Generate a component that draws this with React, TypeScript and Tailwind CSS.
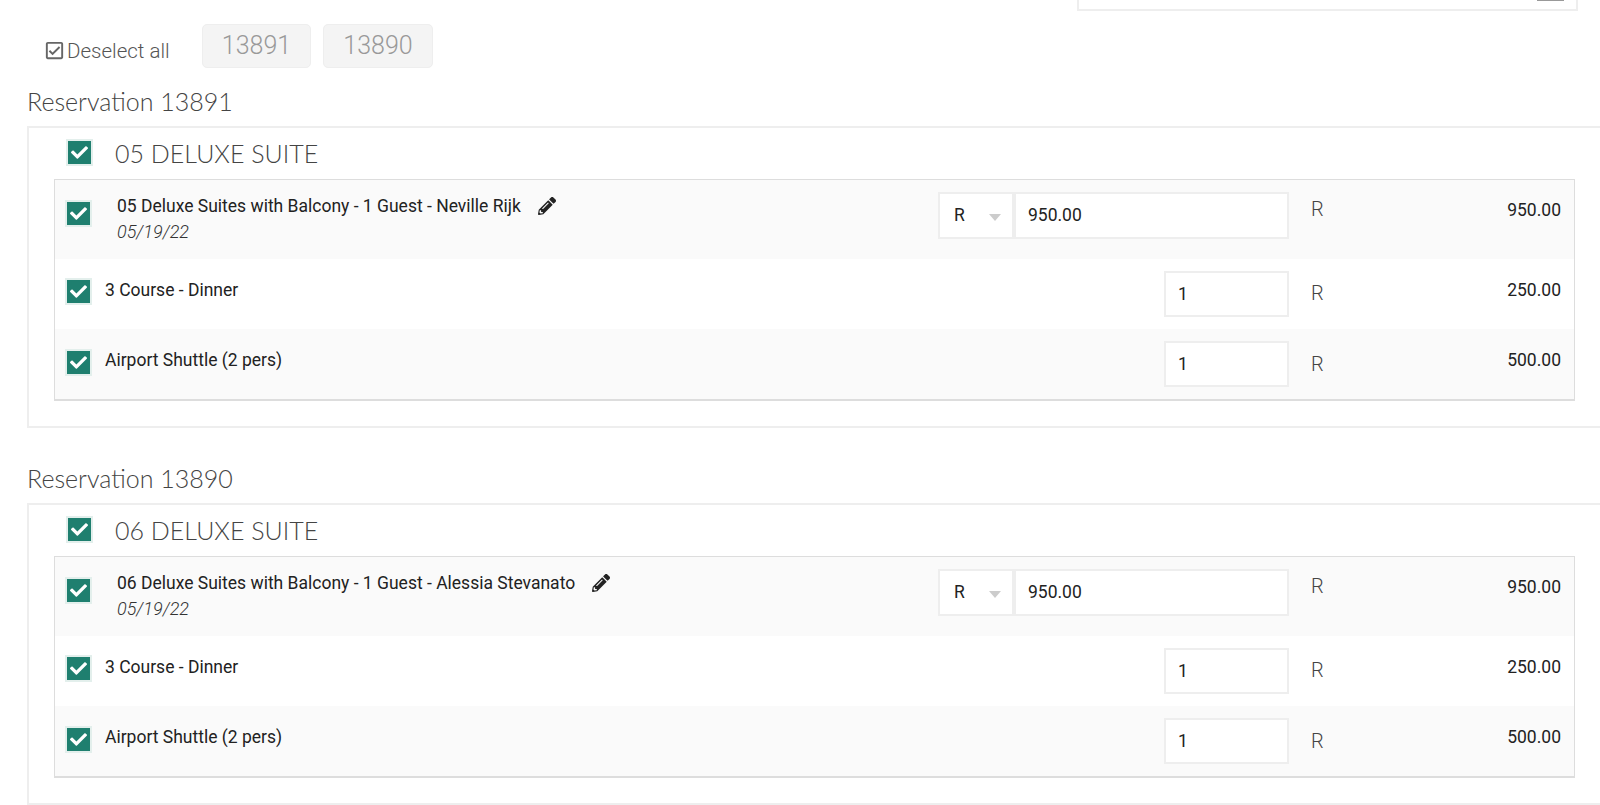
import React from "react";
import { FaCheck, FaPencilAlt } from "react-icons/fa";
import { MdOutlineCheckBox } from "react-icons/md";

const roboto = "font-['Roboto',sans-serif]";
const lato = "font-['Lato',sans-serif]";

function Check({ className = "" }: { className?: string }) {
  return (
    <span className={`flex h-[27px] w-[27px] shrink-0 items-center justify-center border-[2px] border-[#e3efec] bg-[#1f7f6f] text-white ${className}`}>
      <FaCheck size={17} />
    </span>
  );
}

function Field({ children, className = "" }: { children: React.ReactNode; className?: string }) {
  return (
    <div className={`flex h-[46px] items-center border-2 border-[#eeeeee] bg-white text-[17.5px] text-[#222] ${className}`}>
      {children}
    </div>
  );
}

function Row({ label, amount, striped, height, cbTop, textTop, inputTop, rTop, amountTop }: {
  label: string; amount: string; striped?: boolean; height: string; cbTop: string; textTop: string; inputTop: string; rTop: string; amountTop: string;
}) {
  return (
    <div className={`flex items-start ${height} ${striped ? "bg-[#fafafa]" : "bg-white"}`}>
      <Check className={`ml-[10px] ${cbTop}`} />
      <div className={`ml-[13px] flex-1 text-[17.5px] leading-[22px] text-[#222] ${textTop}`}>{label}</div>
      <Field className={`w-[125px] pl-[12px] ${inputTop}`}>1</Field>
      <div className={`ml-[22px] w-[60px] text-[20px] font-light leading-[24px] text-[#444] ${rTop}`}>R</div>
      <div className={`mr-[13px] w-[190px] text-right text-[17.5px] leading-[22px] text-[#222] ${amountTop}`}>{amount}</div>
    </div>
  );
}

function Reservation({ id, room, guest, mtClass }: { id: string; room: string; guest: string; mtClass: string }) {
  return (
    <section className={mtClass}>
      <h2 className={`${lato} mb-[8px] ml-[27px] h-[34px] text-[25px] font-light leading-[34px] text-[#444]`}>Reservation {id}</h2>
      <div className="ml-[27px] h-[302px] w-[1600px] border-2 border-[#eeeeee]">
        <div className="flex h-[51px] items-start">
          <Check className="ml-[37px] mt-[11px]" />
          <div className={`${lato} ml-[22px] mt-[7px] text-[25px] font-light leading-[36px] text-[#444]`}>{room} DELUXE SUITE</div>
        </div>
        <div className="ml-[25px] h-[222px] w-[1521px] border border-b-2 border-[#dddddd]">
          <div className="flex h-[79px] items-start bg-[#fafafa]">
            <Check className="ml-[10px] mt-[20px]" />
            <div className="ml-[25px] flex-1">
              <div className="mt-[15px] flex items-center text-[17.5px] leading-[22px] text-[#222]">
                <span>{room} Deluxe Suites with Balcony - 1 Guest - {guest}</span>
                <FaPencilAlt size={18} className="ml-[17px] text-[#222]" />
              </div>
              <div className="mt-[4px] text-[18px] italic font-light leading-[22px] text-[#333]">05/19/22</div>
            </div>
            <Field className="mt-[12px] h-[47px] w-[76px] justify-between pl-[14px] pr-[11px]">
              <span>R</span>
              <span className="mt-[3px] h-0 w-0 border-x-[6px] border-t-[7px] border-x-transparent border-t-[#cccccc]" />
            </Field>
            <Field className="mt-[12px] h-[47px] w-[275px] pl-[12px]">950.00</Field>
            <div className="ml-[22px] mt-[17px] w-[60px] text-[20px] font-light leading-[24px] text-[#444]">R</div>
            <div className="mr-[13px] mt-[19px] w-[190px] text-right text-[17.5px] leading-[22px] text-[#222]">950.00</div>
          </div>
          <Row label="3 Course - Dinner" amount="250.00" height="h-[70px]" cbTop="mt-[19px]" textTop="mt-[20px]" inputTop="mt-[12px]" rTop="mt-[22px]" amountTop="mt-[20px]" />
          <Row label="Airport Shuttle (2 pers)" amount="500.00" striped height="h-[70px]" cbTop="mt-[20px]" textTop="mt-[20px]" inputTop="mt-[12px]" rTop="mt-[23px]" amountTop="mt-[20px]" />
        </div>
      </div>
    </section>
  );
}

export default function App() {
  return (
    <div className={`${roboto} h-[805px] w-[1600px] overflow-hidden bg-white`}>
      <div className="ml-[1077px] flex h-[11px] w-[501px] items-start justify-end border-x-2 border-b-2 border-[#eeeeee] pr-[12px]">
        <span className="h-[1px] w-[27px] bg-[#999999]" />
      </div>
      <div className="ml-[43px] mt-[13px] flex h-[44px] items-start">
        <MdOutlineCheckBox size={23} className="mt-[15px] shrink-0 text-[#666]" />
        <span className="ml-[1px] mt-[15px] w-[103px] whitespace-nowrap text-[20.5px] font-light leading-[24px] text-[#555]">Deselect all</span>
        <button className="ml-[32px] h-[44px] w-[109px] rounded-[5px] border border-[#eeeeee] bg-[#f4f4f4] text-[25px] font-light text-[#999]">13891</button>
        <button className="ml-[12px] h-[44px] w-[110px] rounded-[5px] border border-[#eeeeee] bg-[#f4f4f4] text-[25px] font-light text-[#999]">13890</button>
      </div>
      <Reservation id="13891" room="05" guest="Neville Rijk" mtClass="mt-[16px]" />
      <Reservation id="13890" room="06" guest="Alessia Stevanato" mtClass="mt-[33px]" />
    </div>
  );
}
